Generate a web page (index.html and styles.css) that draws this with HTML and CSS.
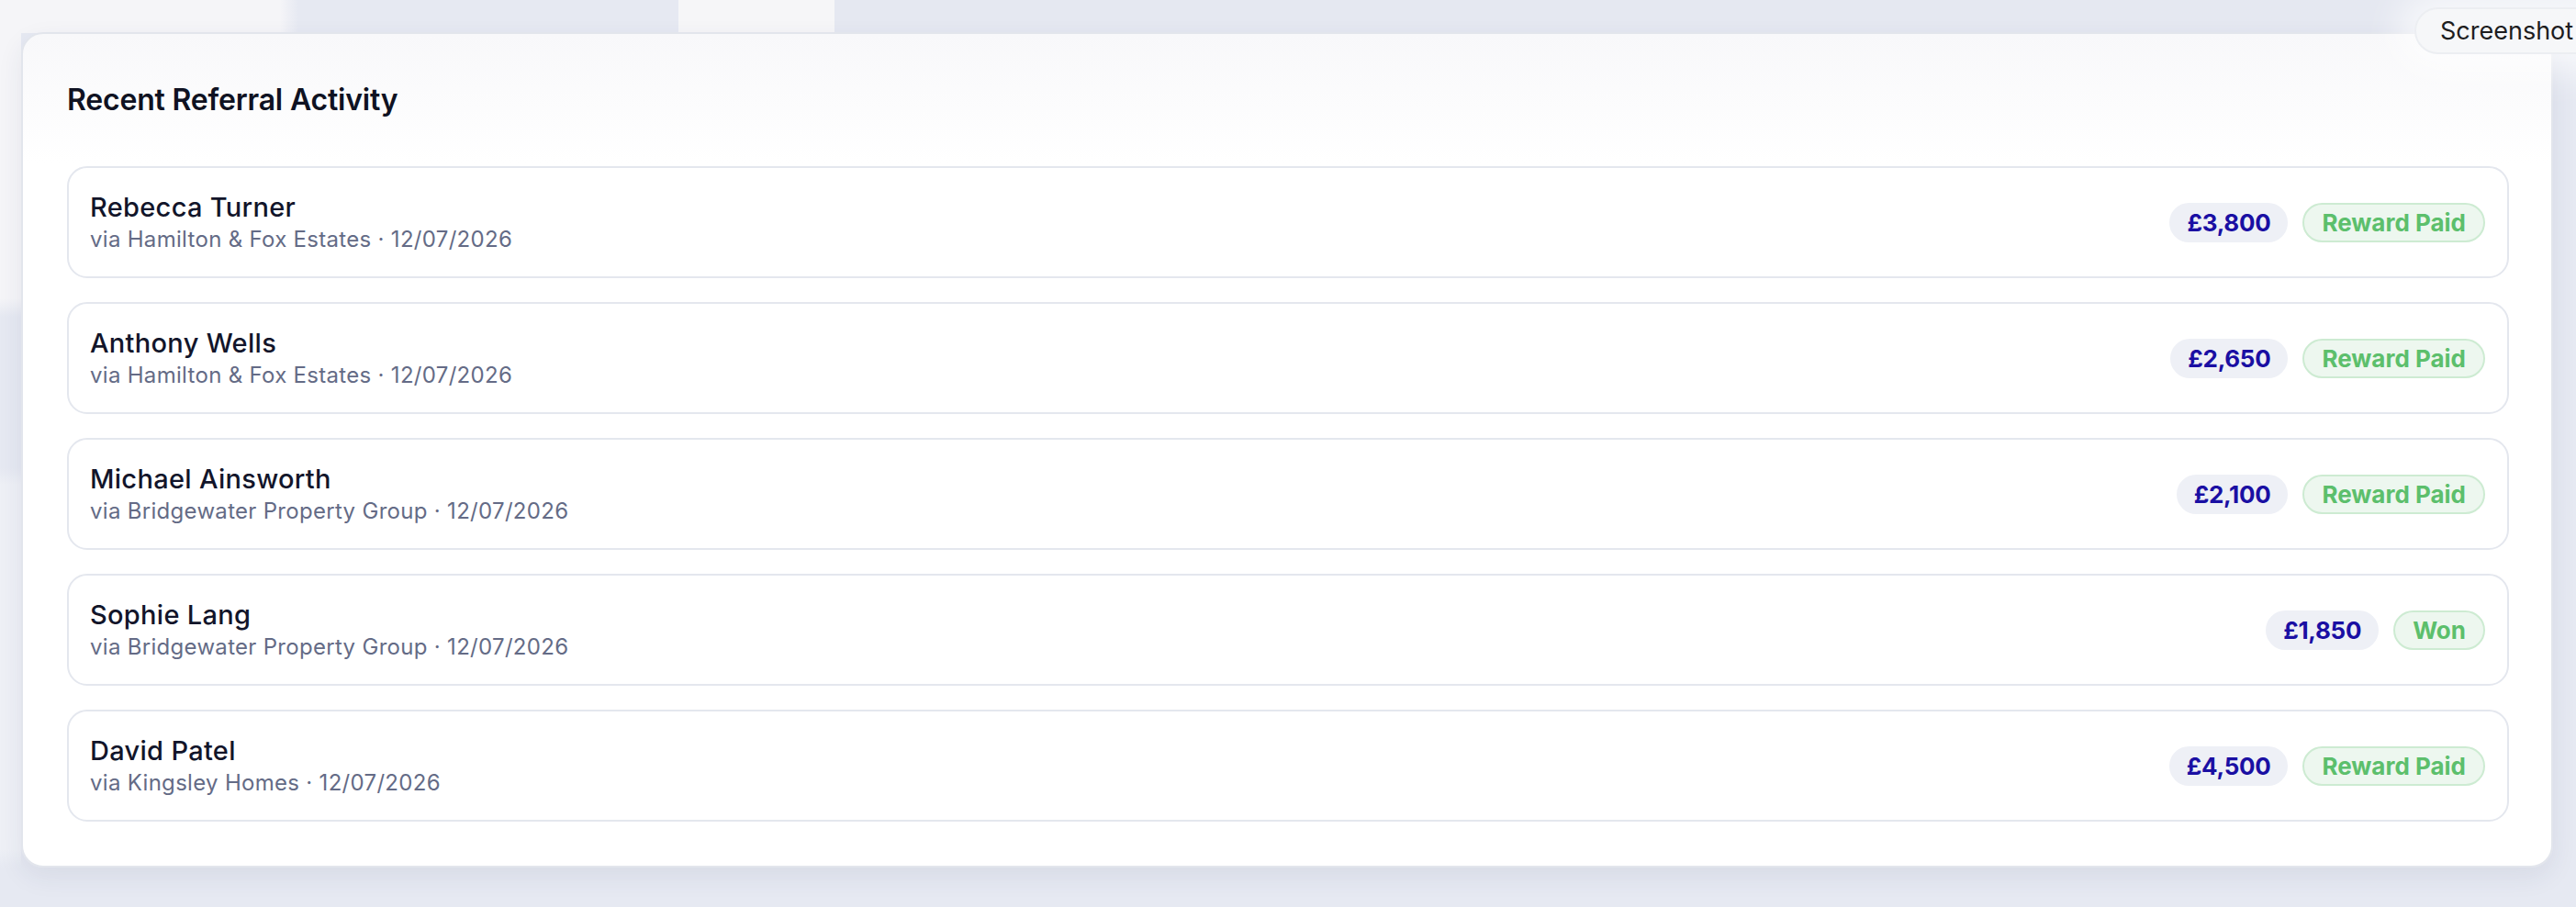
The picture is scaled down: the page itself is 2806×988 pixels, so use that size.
FILE: index.html
```html
<!DOCTYPE html>
<html lang="en">

<head>
    <meta charset="UTF-8">
    <meta name="viewport" content="width=device-width, initial-scale=1.0">
    <title>Referral Activity</title>
    <link rel="stylesheet" href="styles.css">
</head>

<body>
    <!-- Screenshot tag (top right) -->
    <div class="shot-tag">Screenshot</div>

    <div class="page">
        <!-- Recent Referral Activity card -->
        <section class="activity-card">
            <h2 class="card-title">Recent Referral Activity</h2>

            <div class="referral-list">
                <div class="referral-row">
                    <div class="referral-info">
                        <div class="referral-name">Rebecca Turner</div>
                        <div class="referral-meta">via Hamilton &amp; Fox Estates · 12/07/2026</div>
                    </div>
                    <div class="referral-tags">
                        <span class="tag amount">£3,800</span>
                        <span class="tag status">Reward Paid</span>
                    </div>
                </div>

                <div class="referral-row">
                    <div class="referral-info">
                        <div class="referral-name">Anthony Wells</div>
                        <div class="referral-meta">via Hamilton &amp; Fox Estates · 12/07/2026</div>
                    </div>
                    <div class="referral-tags">
                        <span class="tag amount">£2,650</span>
                        <span class="tag status">Reward Paid</span>
                    </div>
                </div>

                <div class="referral-row">
                    <div class="referral-info">
                        <div class="referral-name">Michael Ainsworth</div>
                        <div class="referral-meta">via Bridgewater Property Group · 12/07/2026</div>
                    </div>
                    <div class="referral-tags">
                        <span class="tag amount">£2,100</span>
                        <span class="tag status">Reward Paid</span>
                    </div>
                </div>

                <div class="referral-row">
                    <div class="referral-info">
                        <div class="referral-name">Sophie Lang</div>
                        <div class="referral-meta">via Bridgewater Property Group · 12/07/2026</div>
                    </div>
                    <div class="referral-tags">
                        <span class="tag amount">£1,850</span>
                        <span class="tag status">Won</span>
                    </div>
                </div>

                <div class="referral-row">
                    <div class="referral-info">
                        <div class="referral-name">David Patel</div>
                        <div class="referral-meta">via Kingsley Homes · 12/07/2026</div>
                    </div>
                    <div class="referral-tags">
                        <span class="tag amount">£4,500</span>
                        <span class="tag status">Reward Paid</span>
                    </div>
                </div>
            </div>
        </section>
        <!-- Recent Referral Activity card -->
    </div>
</body>

</html>
```

FILE: styles.css
```css
/* styles.css */
body {
    margin: 0;
    min-height: 100vh;
    font-family: Inter, "Liberation Sans", sans-serif;
    background-color: #e6e9f2;
    background-image:
        linear-gradient(to bottom, #f5f5f8 0, #f5f5f8 325px, #e6e9f2 345px, #e6e9f2 510px, #eef0f6 528px, #eef0f6 925px, #e6e9f2 945px),
        linear-gradient(to right, #f5f5f8 0, #f5f5f8 305px, #e6e9f2 325px, #e6e9f2 739px, #f6f6f8 739px, #f6f6f8 909px, #e5e8f1 909px);
    background-repeat: no-repeat;
    background-size: 23px 100%, 100% 36px;
    overflow: hidden;
}

.page {
    padding: 35px 25px 0 23px;
}

/* card */
.activity-card {
    background: linear-gradient(#f8f8fa, #ffffff 140px);
    border: 2px solid #e2e5ec;
    border-radius: 24px;
    padding: 48px 46px 48px 48px;
    box-shadow: 0 10px 28px rgba(40, 50, 90, 0.08);
}

.card-title {
    margin: 0 0 48px 0;
    font-size: 32px;
    line-height: 48px;
    font-weight: 600;
    color: #0f1222;
    letter-spacing: -0.2px;
}

.referral-list {
    display: flex;
    flex-direction: column;
    gap: 26px;
}

.referral-row {
    display: flex;
    justify-content: space-between;
    align-items: center;
    padding: 24px 24px 24px 23px;
    border: 2px solid #e4e7ee;
    border-radius: 22px;
    background-color: #ffffff;
}

.referral-name {
    font-size: 29px;
    line-height: 38px;
    font-weight: 500;
    color: #12152a;
    letter-spacing: 0.3px;
}

.referral-meta {
    font-size: 24px;
    line-height: 32px;
    color: #646b86;
    letter-spacing: 0.3px;
}

.referral-tags {
    display: flex;
    align-items: center;
    gap: 16px;
}

.tag {
    font-size: 26px;
    line-height: 31px;
    font-weight: 700;
    padding: 4px 19px;
    border: 2px solid transparent;
    border-radius: 24px;
}

.amount {
    padding: 4px 17px;
    background-color: #eef0f6;
    border-color: #eef0f6;
    color: #1a0fa3;
    letter-spacing: -0.3px;
}

.status {
    background-color: #edf7ef;
    border-color: #cdebd2;
    color: #5cbf6c;
}

/* screenshot tag */
.shot-tag {
    position: absolute;
    top: 8px;
    left: 2630px;
    width: 220px;
    height: 47px;
    padding-left: 26px;
    border: 2px solid #eceef2;
    border-radius: 26px;
    background-color: #f6f7f9;
    font-size: 27px;
    line-height: 47px;
    color: #1d1d1f;
    box-shadow: 0 0 40px 18px rgba(255, 255, 255, 0.7);
}
```
